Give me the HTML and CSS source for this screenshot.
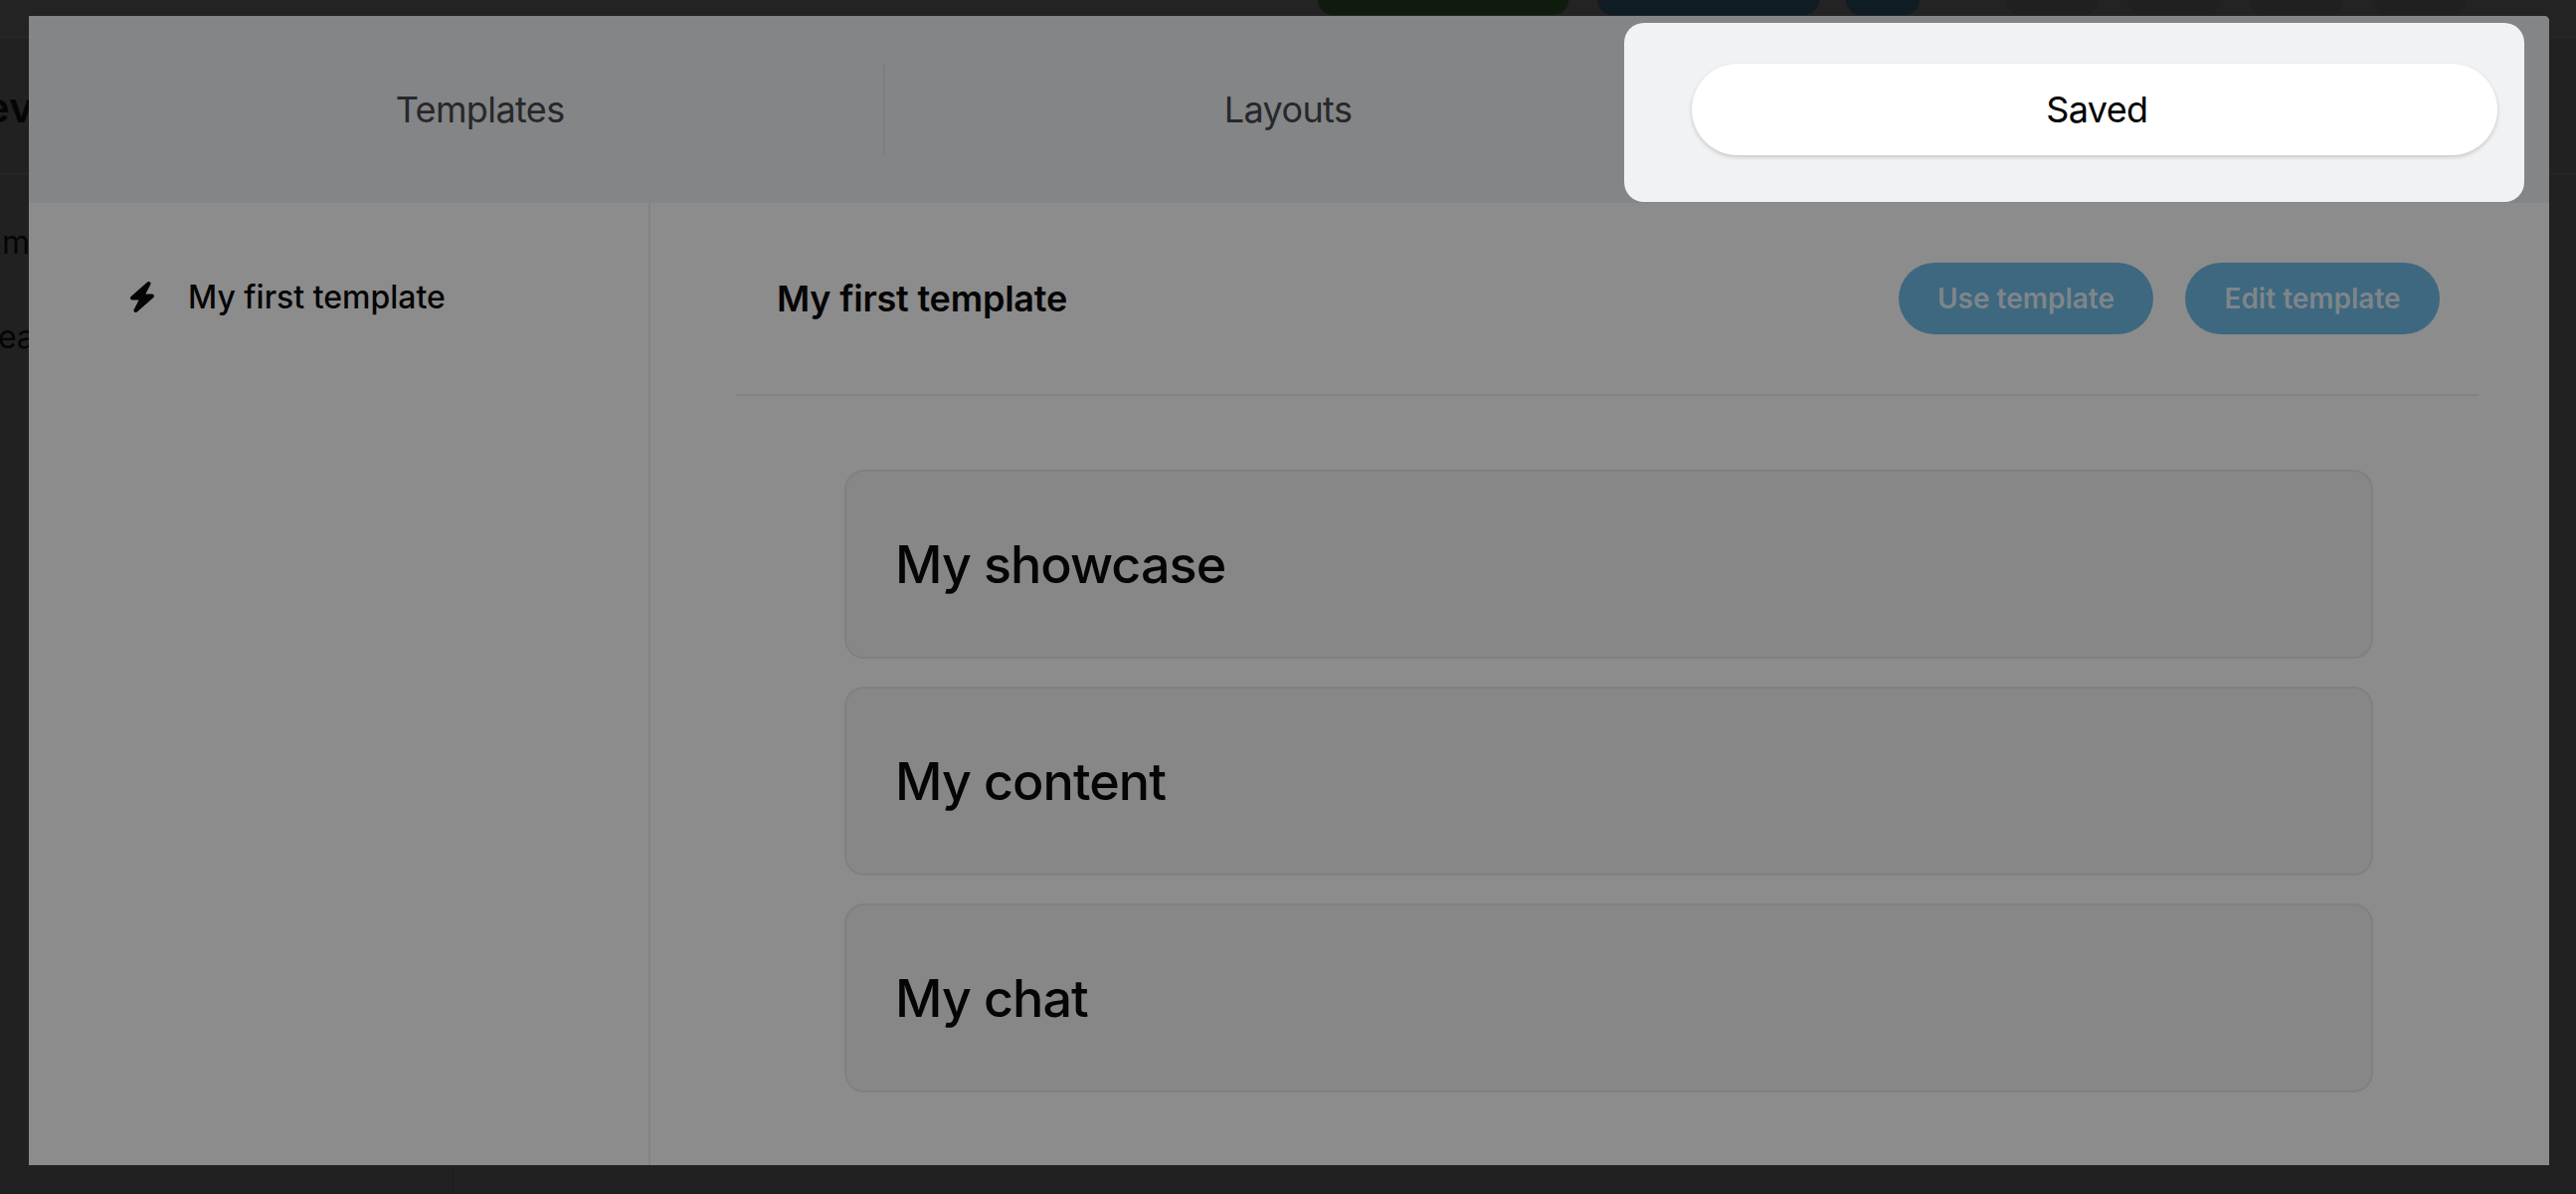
FILE: index.html
```html
<!DOCTYPE html>
<html lang="en">
<head>
  <meta charset="UTF-8">
  <title>Templates</title>
  <link rel="stylesheet" href="styles.css">
</head>
<body>
  <!-- page behind the modal -->
  <div class="page">
    <div class="topbar">
      <span class="top-pill top-green"></span>
      <span class="top-pill top-blue"></span>
      <span class="top-pill top-blue-small"></span>
      <span class="top-pill top-faint"></span>
      <span class="top-pill top-faint"></span>
      <span class="top-pill top-faint"></span>
      <span class="top-pill top-faint"></span>
    </div>
    <div class="page-head"><h1 class="page-title">Preview</h1></div>
    <div class="page-body">
      <div class="page-side">
        <div class="page-link link-m">Team</div>
        <div class="page-link link-eat">Create</div>
      </div>
    </div>
  </div>

  <div class="modal">
    <div class="tabs">
      <div class="tab">Templates</div>
      <div class="tab tab-line">Layouts</div>
      <div class="tab-wrap">
        <div class="spot"></div>
        <div class="tab tab-active">Saved</div>
      </div>
    </div>

    <div class="modal-body">
      <div class="sidebar">
        <div class="side-item">
          <svg class="bolt" viewBox="0 0 24 31" width="24" height="31">
            <path d="M18.500 2 L2 16.500 H12 L5.500 29 L22 14.500 H12 Z" fill="#050505" stroke="#050505" stroke-width="4" stroke-linejoin="round"/>
          </svg>
          <span>My first template</span>
        </div>
      </div>

      <div class="main">
        <div class="main-head">
          <div class="main-title">My first template</div>
          <div class="actions">
            <div class="btn">Use template</div>
            <div class="btn">Edit template</div>
          </div>
        </div>
        <div class="cards">
          <div class="card">My showcase</div>
          <div class="card">My content</div>
          <div class="card">My chat</div>
        </div>
      </div>
    </div>
  </div>
</body>
</html>
```

FILE: styles.css
```css
* {
  box-sizing: border-box;
}

body {
  margin: 0;
  height: 1200px;
  overflow: hidden;
  position: relative;
  background: #212121;
  font-family: Inter, 'Noto Sans', sans-serif;
  color: #050505;
}

/* Page behind */
.page {
  height: 100%;
  display: flex;
  flex-direction: column;
  overflow: hidden;
}

.topbar {
  height: 38px;
  flex-shrink: 0;
  display: flex;
  align-items: flex-start;
  padding-left: 1325px;
  background: #232323;
  border-bottom: 1px solid #282828;
}

.top-pill {
  height: 15px;
  border-radius: 0 0 22px 22px;
  margin-right: 29px;
}

.top-green {
  width: 252px;
  background: #0f1b0d;
}

.top-blue {
  width: 223px;
  margin-right: 27px;
  background: #0f1c24;
}

.top-blue-small {
  width: 74px;
  margin-right: 86px;
  background: #0f1c24;
}

.top-faint {
  width: 94px;
  height: 15px;
  background: #202020;
}

.page-head {
  height: 137px;
  flex-shrink: 0;
  display: flex;
  align-items: center;
  padding-top: 3px;
  border-bottom: 1px solid #282828;
}

.page-title {
  margin: 0 0 0 -58px;
  font-size: 42px;
  font-weight: 600;
  line-height: 50px;
}

.page-body {
  flex: 1;
}

.page-side {
  width: 456px;
  height: 100%;
  border-right: 1px solid #1c1c1c;
}

.page-link {
  font-size: 32px;
  line-height: 40px;
}

.link-m {
  margin: 49px 0 0 -53px;
}

.link-eat {
  margin: 55px 0 0 -37px;
}

/* Modal */
.modal {
  position: absolute;
  top: 16px;
  left: 29px;
  right: 27px;
  bottom: 29px;
  display: flex;
  flex-direction: column;
  background: #8c8c8c;
  border-top-right-radius: 5px;
}

.tabs {
  height: 188px;
  flex-shrink: 0;
  display: grid;
  grid-template-columns: repeat(3, 1fr);
  padding: 48px 52px 48px 48px;
  background: #848586;
  border-top-right-radius: 5px;
}

.tab {
  display: flex;
  align-items: center;
  justify-content: center;
  font-size: 36px;
  letter-spacing: -0.6px;
  color: #26282b;
}

.tab-line {
  border-left: 2px solid #7d7e80;
}

.tab-wrap {
  position: relative;
  display: flex;
  padding-left: 1px;
}

.spot {
  position: absolute;
  top: -41px;
  left: -67px;
  right: -27px;
  bottom: -47px;
  background: #f1f2f4;
  border-radius: 20px;
}

.tab-active {
  position: relative;
  flex: 1;
  padding-left: 5px;
  background: #fff;
  color: #000;
  border-radius: 46px;
  box-shadow: 0 2px 4px rgba(0, 0, 0, 0.18);
}

.modal-body {
  flex: 1;
  display: flex;
  min-height: 0;
}

.sidebar {
  width: 625px;
  flex-shrink: 0;
  padding: 75px 0 0 102px;
  border-right: 2px solid #828282;
}

.side-item {
  display: flex;
  align-items: center;
  gap: 34px;
  font-size: 32px;
  font-weight: 500;
}

.bolt {
  flex-shrink: 0;
}

.main {
  flex: 1;
}

.main-head {
  height: 194px;
  margin: 0 71px 0 86px;
  padding: 0 39px 0 41px;
  display: flex;
  align-items: center;
  justify-content: space-between;
  border-bottom: 2px solid #838383;
}

.main-title {
  font-size: 36px;
  font-weight: 600;
  letter-spacing: -0.2px;
}

.actions {
  display: flex;
  gap: 32px;
}

.btn {
  width: 256px;
  height: 72px;
  display: flex;
  align-items: center;
  justify-content: center;
  border-radius: 36px;
  background: #3d6880;
  color: #7f8589;
  font-size: 28px;
  font-weight: 600;
}

.cards {
  display: flex;
  flex-direction: column;
  gap: 28px;
  padding: 74px 177px 0 195px;
}

.card {
  height: 190px;
  display: flex;
  align-items: center;
  padding-left: 49px;
  background: #878787;
  border: 2px solid #808080;
  border-radius: 20px;
  font-size: 52px;
  font-weight: 500;
  letter-spacing: -0.9px;
}
```
